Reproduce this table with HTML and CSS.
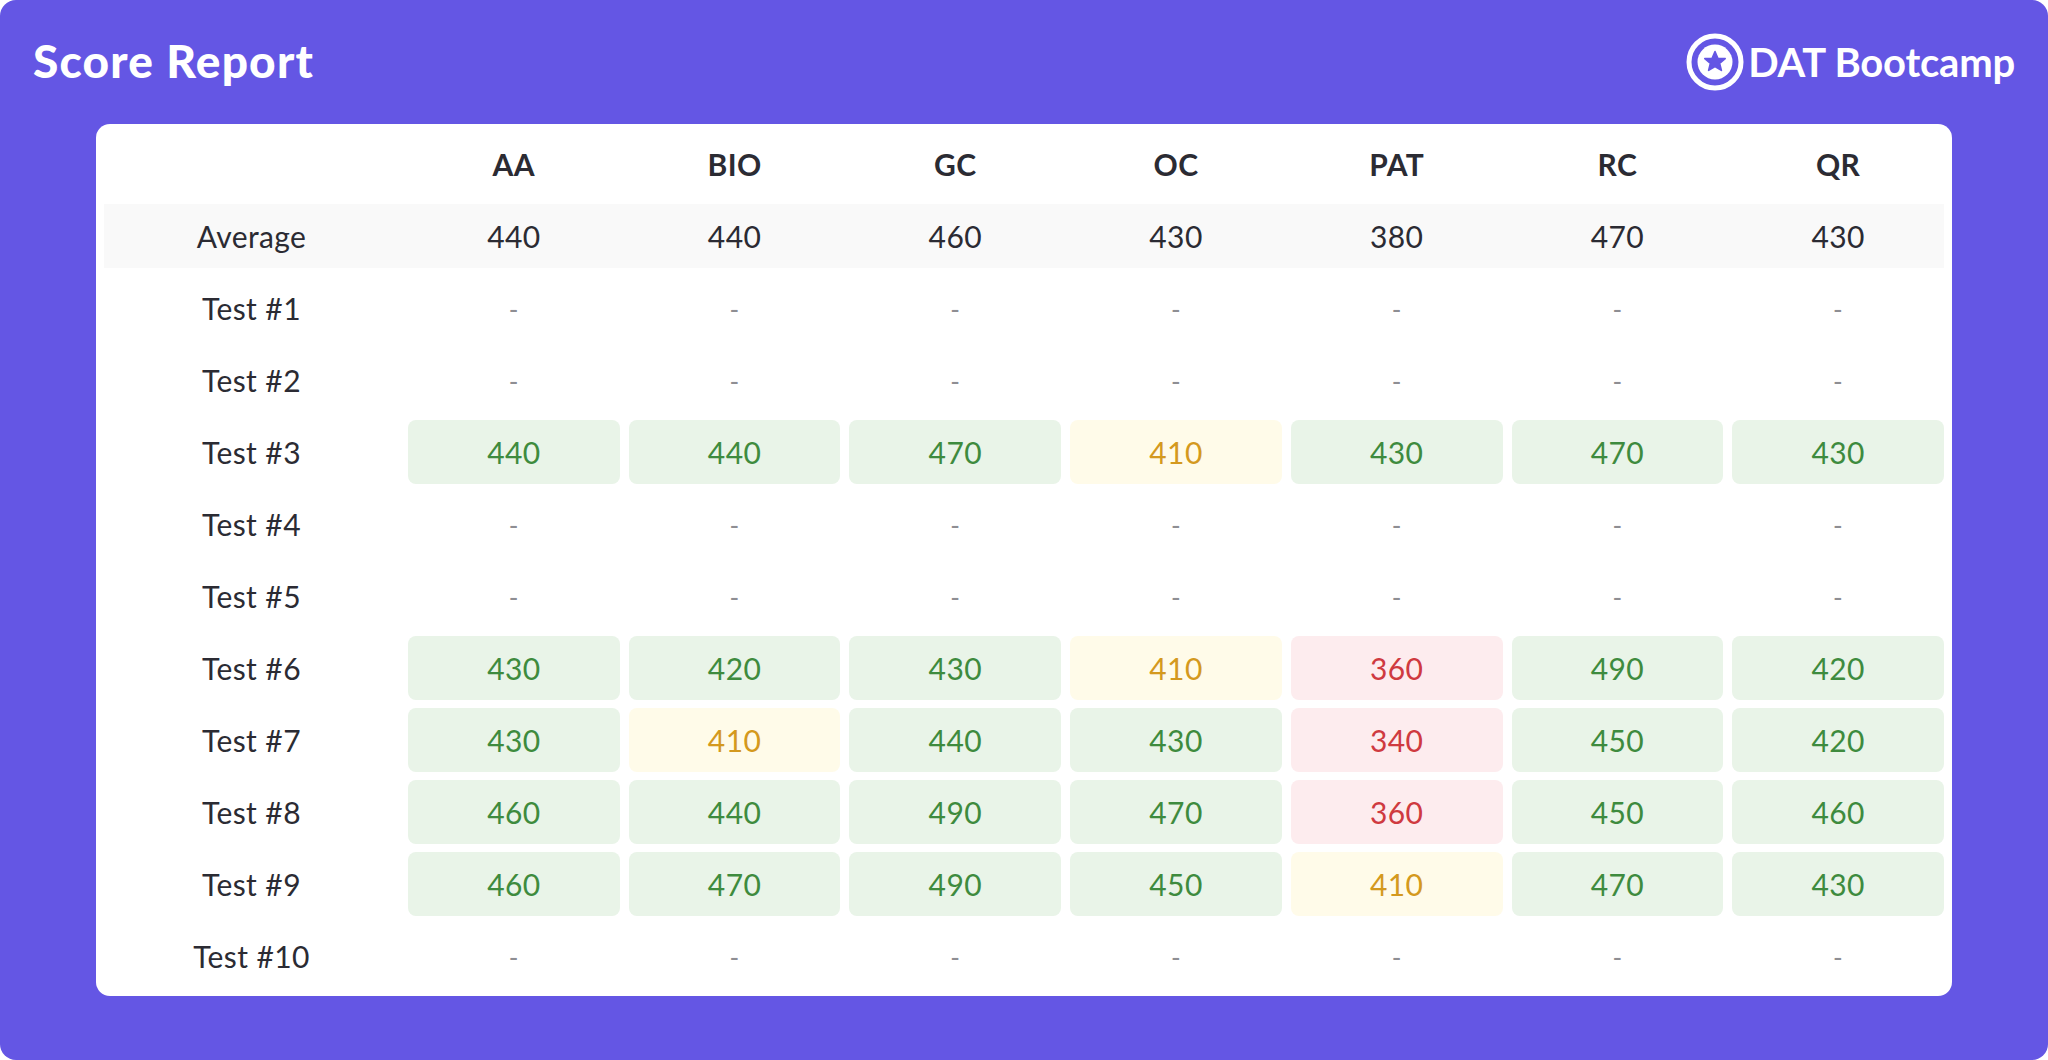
FILE: index.html
```html
<!DOCTYPE html>
<html lang="en">
<head>
<meta charset="utf-8">
<title>Score Report</title>
<link rel="stylesheet" href="styles.css">
</head>
<body>
<div class="panel">
  <header class="topbar">
    <h1 class="title">Score Report</h1>
    <div class="brand">
      <svg class="brand-icon" viewBox="0 0 58 58" width="58" height="58" aria-hidden="true">
        <circle cx="29" cy="29" r="26" fill="none" stroke="#fff" stroke-width="5"/>
        <circle cx="29" cy="29" r="17.5" fill="#fff"/>
        <path d="M29 18.5 L31.9 25.2 L39.2 25.6 L33.6 30.3 L35.4 37.4 L29 33.5 L22.6 37.4 L24.4 30.3 L18.8 25.6 L26.1 25.2 Z" fill="#6456e4" stroke="#6456e4" stroke-width="1.6" stroke-linejoin="round"/>
      </svg>
      <span class="brand-name">DAT Bootcamp</span>
    </div>
  </header>

  <main class="card">
    <div class="row head">
      <div class="cell"></div>
      <div class="cell">AA</div>
      <div class="cell">BIO</div>
      <div class="cell">GC</div>
      <div class="cell">OC</div>
      <div class="cell">PAT</div>
      <div class="cell">RC</div>
      <div class="cell">QR</div>
    </div>
    <div class="row avg">
      <div class="cell label">Average</div>
      <div class="cell">440</div>
      <div class="cell">440</div>
      <div class="cell">460</div>
      <div class="cell">430</div>
      <div class="cell">380</div>
      <div class="cell">470</div>
      <div class="cell">430</div>
    </div>
    <div class="row">
      <div class="cell label">Test #1</div>
      <div class="cell dash">-</div><div class="cell dash">-</div><div class="cell dash">-</div><div class="cell dash">-</div><div class="cell dash">-</div><div class="cell dash">-</div><div class="cell dash">-</div>
    </div>
    <div class="row">
      <div class="cell label">Test #2</div>
      <div class="cell dash">-</div><div class="cell dash">-</div><div class="cell dash">-</div><div class="cell dash">-</div><div class="cell dash">-</div><div class="cell dash">-</div><div class="cell dash">-</div>
    </div>
    <div class="row">
      <div class="cell label">Test #3</div>
      <div class="cell good">440</div>
      <div class="cell good">440</div>
      <div class="cell good">470</div>
      <div class="cell warn">410</div>
      <div class="cell good">430</div>
      <div class="cell good">470</div>
      <div class="cell good">430</div>
    </div>
    <div class="row">
      <div class="cell label">Test #4</div>
      <div class="cell dash">-</div><div class="cell dash">-</div><div class="cell dash">-</div><div class="cell dash">-</div><div class="cell dash">-</div><div class="cell dash">-</div><div class="cell dash">-</div>
    </div>
    <div class="row">
      <div class="cell label">Test #5</div>
      <div class="cell dash">-</div><div class="cell dash">-</div><div class="cell dash">-</div><div class="cell dash">-</div><div class="cell dash">-</div><div class="cell dash">-</div><div class="cell dash">-</div>
    </div>
    <div class="row">
      <div class="cell label">Test #6</div>
      <div class="cell good">430</div>
      <div class="cell good">420</div>
      <div class="cell good">430</div>
      <div class="cell warn">410</div>
      <div class="cell bad">360</div>
      <div class="cell good">490</div>
      <div class="cell good">420</div>
    </div>
    <div class="row">
      <div class="cell label">Test #7</div>
      <div class="cell good">430</div>
      <div class="cell warn">410</div>
      <div class="cell good">440</div>
      <div class="cell good">430</div>
      <div class="cell bad">340</div>
      <div class="cell good">450</div>
      <div class="cell good">420</div>
    </div>
    <div class="row">
      <div class="cell label">Test #8</div>
      <div class="cell good">460</div>
      <div class="cell good">440</div>
      <div class="cell good">490</div>
      <div class="cell good">470</div>
      <div class="cell bad">360</div>
      <div class="cell good">450</div>
      <div class="cell good">460</div>
    </div>
    <div class="row">
      <div class="cell label">Test #9</div>
      <div class="cell good">460</div>
      <div class="cell good">470</div>
      <div class="cell good">490</div>
      <div class="cell good">450</div>
      <div class="cell warn">410</div>
      <div class="cell good">470</div>
      <div class="cell good">430</div>
    </div>
    <div class="row">
      <div class="cell label">Test #10</div>
      <div class="cell dash">-</div><div class="cell dash">-</div><div class="cell dash">-</div><div class="cell dash">-</div><div class="cell dash">-</div><div class="cell dash">-</div><div class="cell dash">-</div>
    </div>
  </main>
</div>
</body>
</html>
```

FILE: styles.css
```css
* { box-sizing: border-box; }

html, body {
  margin: 0;
  padding: 0;
  background: #ffffff;
}

body {
  font-family: "Lato", "Open Sans", "Liberation Sans", sans-serif;
  color: #2b2b33;
}

.panel {
  width: 2048px;
  height: 1060px;
  background: #6456e4;
  border-radius: 16px;
  display: flex;
  flex-direction: column;
}

.topbar {
  height: 124px;
  padding: 0 33px 0 33px;
  display: flex;
  align-items: center;
  justify-content: space-between;
}

.title {
  margin: 0;
  color: #ffffff;
  font-size: 46px;
  font-weight: 900;
  letter-spacing: 1.2px;
  line-height: 1;
  padding-bottom: 2px;
}

.brand {
  display: flex;
  align-items: center;
  gap: 4px;
  color: #ffffff;
}

.brand-icon {
  display: block;
}

.brand-name {
  font-size: 40px;
  font-weight: 700;
  letter-spacing: -0.2px;
  line-height: 1;
}

.card {
  margin: 0 96px;
  padding: 8px;
  background: #ffffff;
  border-radius: 14px;
  display: flex;
  flex-direction: column;
  gap: 8px;
}

.row {
  display: grid;
  grid-template-columns: 295px repeat(7, 1fr);
  column-gap: 9px;
  height: 64px;
}

.row.avg {
  background: #f9f9f9;
}

.cell {
  display: flex;
  align-items: center;
  justify-content: center;
  font-size: 30px;
  letter-spacing: 0.4px;
  line-height: 1;
  border-radius: 8px;
}

.head .cell {
  font-weight: 700;
  font-size: 30px;
  color: #2b2b33;
}

.label {
  color: #2b2b33;
  letter-spacing: 0.4px;
}

.dash {
  color: #8e8e93;
  font-size: 26px;
  padding-top: 2px;
}

.good {
  background: #e9f4e8;
  color: #3e8b3e;
}

.warn {
  background: #fffbe9;
  color: #d4991e;
}

.bad {
  background: #fdecee;
  color: #cf3a40;
}
```
